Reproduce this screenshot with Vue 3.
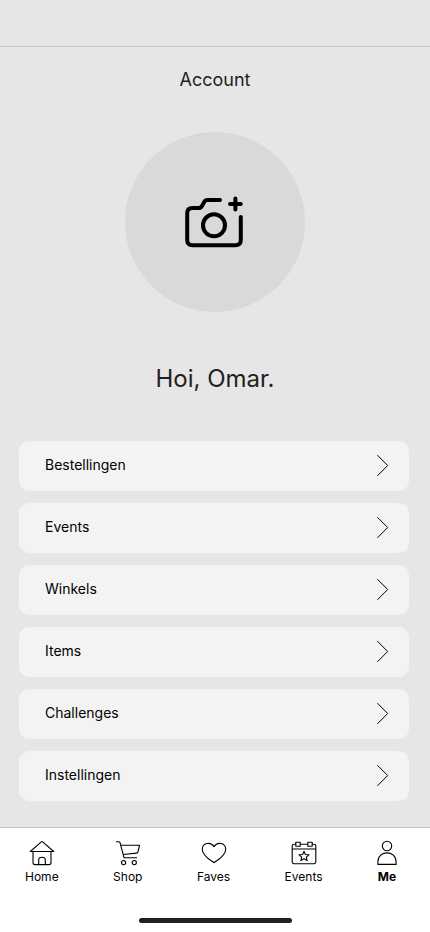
<script setup>
const entries = ['Bestellingen', 'Events', 'Winkels', 'Items', 'Challenges', 'Instellingen']

const tabs = [
  { label: 'Home', icon: 'home' },
  { label: 'Shop', icon: 'shop' },
  { label: 'Faves', icon: 'faves' },
  { label: 'Events', icon: 'events' },
  { label: 'Me', icon: 'me', active: true }
]
</script>

<template>
  <div class="screen">
    <div class="status-bar"></div>

    <main class="content">
      <h1 class="title">Account</h1>

      <button class="avatar" type="button" aria-label="Foto toevoegen">
        <svg class="camera" viewBox="0 0 60 60" aria-hidden="true">
          <path d="M35 8H22.5Q20.3 8 19.2 10L16.8 14.2Q15.8 16 13.5 16H7.5Q2.2 16 2.2 21.3V48Q2.2 53.3 7.5 53.3H50.5Q55.8 53.3 55.8 48V25" />
          <path d="M50.4 6.6V17.4M45 12H55.8" />
          <circle cx="29" cy="33.3" r="11" />
        </svg>
      </button>

      <p class="greeting">Hoi, Omar.</p>

      <ul class="menu">
        <li v-for="entry in entries" :key="entry">
          <a class="row" href="#">
            <span>{{ entry }}</span>
            <svg class="chevron" viewBox="0 0 12 22" aria-hidden="true">
              <path d="M.4 1.2L10.7 11.5L.4 21.8" />
            </svg>
          </a>
        </li>
      </ul>
    </main>

    <footer class="footer">
      <nav class="tabs">
        <a v-for="tab in tabs" :key="tab.icon" class="tab" :class="{ active: tab.active }" href="#">
          <svg v-if="tab.icon === 'me'" class="tab-icon narrow" viewBox="3 0 20 26" aria-hidden="true">
            <circle cx="13" cy="6" r="4.7" />
            <path d="M3.9 24.4V21.8C3.9 9.9 22.1 9.9 22.1 21.8V24.4Z" />
          </svg>
          <svg v-else class="tab-icon" viewBox="0 0 26 26" aria-hidden="true">
            <template v-if="tab.icon === 'home'">
              <path d="M1.3 11.5L12.3 1.8Q13 1.2 13.7 1.8L24.7 11.5Z" />
              <path d="M4 11.5V22.5Q4 24.6 6.1 24.6H19.9Q22 24.6 22 22.5V11.5" />
              <path d="M9.7 24.6V19.8Q9.7 17.2 13 17.2Q16.3 17.2 16.3 19.8V24.6" />
            </template>
            <template v-else-if="tab.icon === 'shop'">
              <path d="M.9 1.7H3.7Q4.7 1.7 5 2.7L9 17.7H22" />
              <path d="M5.9 5.2H24.6L22.9 12Q22.6 13 21.6 13.1L8.3 14.5" />
              <circle cx="8.6" cy="22.6" r="2.1" />
              <circle cx="19.3" cy="22.6" r="2.1" />
            </template>
            <template v-else-if="tab.icon === 'faves'">
              <path d="M13 22.7C10.2 20.5 1.3 15.8 1.3 9.4C1.3 2.9 9.6 1.2 13 6.6C16.4 1.2 24.7 2.9 24.7 9.4C24.7 15.8 15.8 20.5 13 22.7Z" />
            </template>
            <template v-else>
              <path d="M4.5 4.3H3Q1.2 4.3 1.2 6.1V21.8Q1.2 23.7 3 23.7H23Q24.8 23.7 24.8 21.8V6.1Q24.8 4.3 23 4.3H21.5M9.2 4.3H16.8M1.2 9H24.8" />
              <path d="M4.8 2.2H9.2V6.3H4.8ZM16.8 2.2H21.2V6.3H16.8Z" />
              <path d="M13 11.2L14.4 14.5L18 14.8L15.3 17.1L16.1 20.6L13 18.7L9.9 20.6L10.7 17.1L8 14.8L11.6 14.5Z" />
            </template>
          </svg>
          <span>{{ tab.label }}</span>
        </a>
      </nav>
      <div class="home-indicator"></div>
    </footer>
  </div>
</template>

<style>
body {
  margin: 0;
  background: #e6e6e6;
}
</style>

<style scoped>
.screen {
  min-height: 100vh;
  display: flex;
  flex-direction: column;
  background: #e6e6e6;
  color: #000;
  font-family: Inter, "Liberation Sans", sans-serif;
}

.status-bar {
  height: 46px;
  border-bottom: 1px solid #c4c4c4;
}

.content {
  flex: 1;
  display: flex;
  flex-direction: column;
  align-items: center;
  padding: 21px 0 26px;
}

.title {
  margin: 0;
  font-size: 18px;
  font-weight: 400;
  line-height: 24px;
  color: #231f20;
}

.avatar {
  width: 180px;
  height: 180px;
  margin: 40px 0 51px;
  padding: 0;
  border: 0;
  border-radius: 50%;
  background: #d9d9d9;
  color: #000;
  display: grid;
  place-items: center;
  cursor: pointer;
}

.camera {
  width: 60px;
  height: 60px;
  fill: none;
  stroke: currentColor;
  stroke-width: 4;
  stroke-linecap: round;
  stroke-linejoin: round;
}

.greeting {
  margin: 0;
  font-size: 24px;
  font-weight: 400;
  line-height: 32px;
  color: #231f20;
}

.menu {
  align-self: stretch;
  display: flex;
  flex-direction: column;
  gap: 12px;
  margin: 46px 21px 0 19px;
  padding: 0;
  list-style: none;
}

.row {
  height: 50px;
  box-sizing: border-box;
  display: flex;
  align-items: center;
  justify-content: space-between;
  padding: 0 20px 2px 26px;
  border-radius: 10px;
  background: #f3f3f3;
  color: inherit;
  font-size: 14px;
  line-height: 20px;
  text-decoration: none;
}

.chevron {
  width: 12px;
  height: 22px;
  fill: none;
  stroke: currentColor;
  stroke-width: 1;
}

.footer {
  display: flex;
  flex-direction: column;
  align-items: center;
  gap: 33px;
  padding: 12px 0 9px;
  border-top: 1px solid #c4c4c4;
  background: #fff;
}

.tabs {
  align-self: stretch;
  display: flex;
  justify-content: space-between;
  padding: 0 33px 0 25px;
}

.tab {
  display: flex;
  flex-direction: column;
  align-items: center;
  gap: 3px;
  color: inherit;
  font-size: 12px;
  line-height: 16px;
  text-decoration: none;
}

.tab.active {
  font-weight: 700;
}

.tab-icon {
  width: 26px;
  height: 26px;
  fill: none;
  stroke: currentColor;
  stroke-width: 1.1;
  stroke-linejoin: round;
}

.tab-icon.narrow {
  width: 20px;
}

.home-indicator {
  width: 153px;
  height: 5px;
  border-radius: 3px;
  background: #231f20;
}
</style>
